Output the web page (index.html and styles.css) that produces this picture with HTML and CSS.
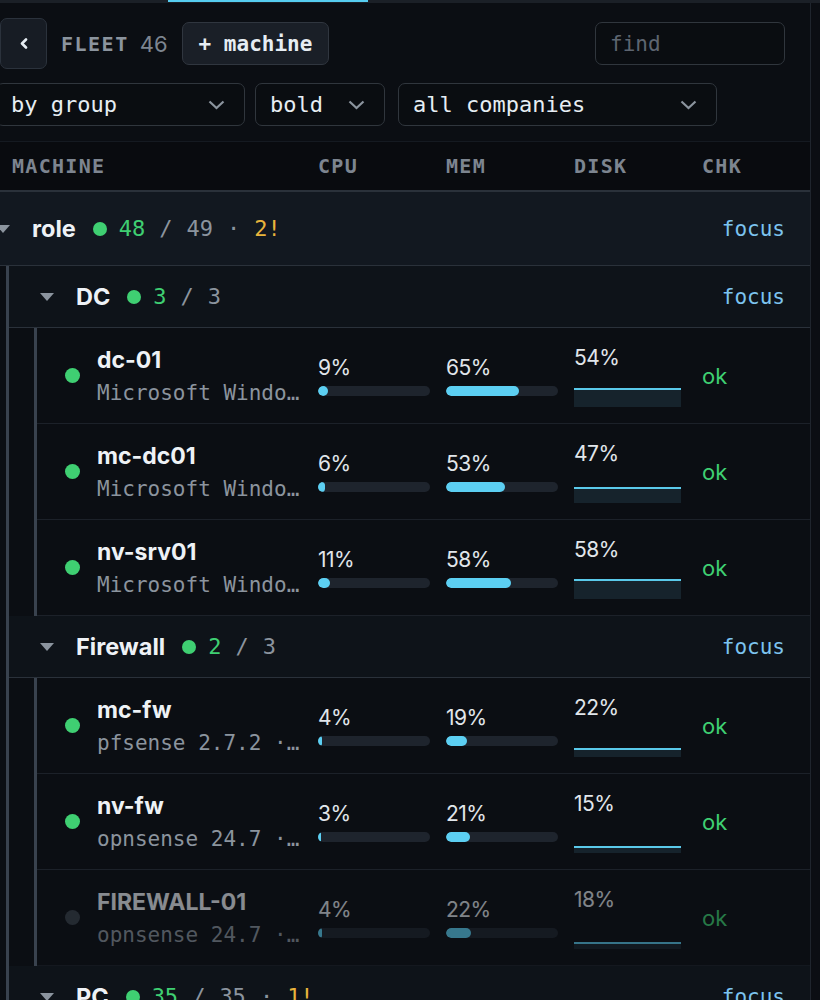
FILE: index.html
```html
<!DOCTYPE html>
<html lang="en">
<head>
<meta charset="UTF-8">
<meta name="viewport" content="width=device-width, initial-scale=1.0">
<title>Fleet</title>
<link rel="stylesheet" href="styles.css">
</head>
<body>
<div class="tabs"><div class="tab-on"></div></div>

<div class="panel">
  <!-- toolbar -->
  <div class="bar">
    <button class="back"><svg width="8" height="11" viewBox="0 0 8 11"><polyline points="6,1.5 2,5.5 6,9.5" fill="none" stroke="#e6edf3" stroke-width="2.6" stroke-linecap="round" stroke-linejoin="round"/></svg></button>
    <span class="title">FLEET</span><span class="count">46</span>
    <button class="add">+ machine</button>
    <input class="find" type="text" placeholder="find">
  </div>

  <div class="filters">
    <div class="select s-group">by group<svg width="17" height="10" viewBox="0 0 17 10"><polyline points="1.5,1.5 8.5,8 15.5,1.5" fill="none" stroke="#8b949e" stroke-width="2.2"/></svg></div>
    <div class="select s-style">bold<svg width="17" height="10" viewBox="0 0 17 10"><polyline points="1.5,1.5 8.5,8 15.5,1.5" fill="none" stroke="#8b949e" stroke-width="2.2"/></svg></div>
    <div class="select s-co">all companies<svg width="17" height="10" viewBox="0 0 17 10"><polyline points="1.5,1.5 8.5,8 15.5,1.5" fill="none" stroke="#8b949e" stroke-width="2.2"/></svg></div>
  </div>

  <!-- table -->
  <div class="thead">
    <div class="th-name">MACHINE</div><div>CPU</div><div>MEM</div><div>DISK</div><div>CHK</div>
  </div>

  <div class="group">
    <div class="ghead root">
      <svg class="caret" width="14" height="8" viewBox="0 0 14 8"><polygon points="0,0 14,0 7,8" fill="#8b949e"/></svg>
      <span class="gname">role</span>
      <span class="dot on"></span>
      <span class="up">48</span><span class="dim">/</span><span class="dim">49</span><span class="dim">·</span><span class="warn">2!</span>
      <a class="focus">focus</a>
    </div>

    <div class="kids">
      <!-- DC -->
      <div class="group">
        <div class="ghead">
          <svg class="caret" width="14" height="8" viewBox="0 0 14 8"><polygon points="0,0 14,0 7,8" fill="#8b949e"/></svg>
          <span class="gname">DC</span>
          <span class="dot on"></span>
          <span class="up">3</span><span class="dim">/</span><span class="dim">3</span>
          <a class="focus">focus</a>
        </div>
        <div class="kids">
          <div class="row">
            <div class="who"><span class="dot on"></span><div class="names"><div class="host">dc-01</div><div class="os">Microsoft Windows Server 2022</div></div></div>
            <div class="metric"><span class="pct">9%</span><div class="track"><div class="fill" style="width:9%"></div></div></div>
            <div class="metric"><span class="pct">65%</span><div class="track"><div class="fill" style="width:65%"></div></div></div>
            <div class="metric disk"><span class="pct">54%</span><div class="spark"><div class="area" style="height:54%"></div></div></div>
            <div class="chk">ok</div>
          </div>
          <div class="row">
            <div class="who"><span class="dot on"></span><div class="names"><div class="host">mc-dc01</div><div class="os">Microsoft Windows Server 2019</div></div></div>
            <div class="metric"><span class="pct">6%</span><div class="track"><div class="fill" style="width:6%"></div></div></div>
            <div class="metric"><span class="pct">53%</span><div class="track"><div class="fill" style="width:53%"></div></div></div>
            <div class="metric disk"><span class="pct">47%</span><div class="spark"><div class="area" style="height:47%"></div></div></div>
            <div class="chk">ok</div>
          </div>
          <div class="row">
            <div class="who"><span class="dot on"></span><div class="names"><div class="host">nv-srv01</div><div class="os">Microsoft Windows Server 2022</div></div></div>
            <div class="metric"><span class="pct">11%</span><div class="track"><div class="fill" style="width:11%"></div></div></div>
            <div class="metric"><span class="pct">58%</span><div class="track"><div class="fill" style="width:58%"></div></div></div>
            <div class="metric disk"><span class="pct">58%</span><div class="spark"><div class="area" style="height:58%"></div></div></div>
            <div class="chk">ok</div>
          </div>
        </div>
      </div>

      <!-- Firewall -->
      <div class="group">
        <div class="ghead">
          <svg class="caret" width="14" height="8" viewBox="0 0 14 8"><polygon points="0,0 14,0 7,8" fill="#8b949e"/></svg>
          <span class="gname">Firewall</span>
          <span class="dot on"></span>
          <span class="up">2</span><span class="dim">/</span><span class="dim">3</span>
          <a class="focus">focus</a>
        </div>
        <div class="kids">
          <div class="row">
            <div class="who"><span class="dot on"></span><div class="names"><div class="host">mc-fw</div><div class="os">pfsense 2.7.2 · FreeBSD 14.0</div></div></div>
            <div class="metric"><span class="pct">4%</span><div class="track"><div class="fill" style="width:4%"></div></div></div>
            <div class="metric"><span class="pct">19%</span><div class="track"><div class="fill" style="width:19%"></div></div></div>
            <div class="metric disk"><span class="pct">22%</span><div class="spark"><div class="area" style="height:24%"></div></div></div>
            <div class="chk">ok</div>
          </div>
          <div class="row">
            <div class="who"><span class="dot on"></span><div class="names"><div class="host">nv-fw</div><div class="os">opnsense 24.7 · FreeBSD 14.1</div></div></div>
            <div class="metric"><span class="pct">3%</span><div class="track"><div class="fill" style="width:3%"></div></div></div>
            <div class="metric"><span class="pct">21%</span><div class="track"><div class="fill" style="width:21%"></div></div></div>
            <div class="metric disk"><span class="pct">15%</span><div class="spark"><div class="area" style="height:18%"></div></div></div>
            <div class="chk">ok</div>
          </div>
          <div class="row offline">
            <div class="who"><span class="dot"></span><div class="names"><div class="host">FIREWALL-01</div><div class="os">opnsense 24.7 · FreeBSD 14.1</div></div></div>
            <div class="metric"><span class="pct">4%</span><div class="track"><div class="fill" style="width:4%"></div></div></div>
            <div class="metric"><span class="pct">22%</span><div class="track"><div class="fill" style="width:22%"></div></div></div>
            <div class="metric disk"><span class="pct">18%</span><div class="spark"><div class="area" style="height:18%"></div></div></div>
            <div class="chk">ok</div>
          </div>
        </div>
      </div>

      <!-- PC -->
      <div class="group">
        <div class="ghead">
          <svg class="caret" width="14" height="8" viewBox="0 0 14 8"><polygon points="0,0 14,0 7,8" fill="#8b949e"/></svg>
          <span class="gname">PC</span>
          <span class="dot on"></span>
          <span class="up">35</span><span class="dim">/</span><span class="dim">35</span><span class="dim">·</span><span class="warn">1!</span>
          <a class="focus">focus</a>
        </div>
      </div>
    </div>
  </div>
</div>
</body>
</html>
```

FILE: styles.css
```css
:root{
  --mono:"DejaVu Sans Mono","Liberation Mono",monospace;
  --sans:Inter,"Noto Sans",sans-serif;
  --bg:#0b0e13;
  --line:#1c2129;
  --edge:#2a313a;
  --text:#e6edf3;
  --muted:#8b949e;
  --green:#3fcf72;
  --cyan:#5ccff2;
}
html,body{margin:0;background:var(--bg);overflow:hidden;}
body{font-family:var(--mono);color:var(--text);}

.tabs{height:3px;background:#1b2027;}
.tab-on{margin-left:168px;width:200px;height:2px;background:#56cdf0;}

.panel{margin-left:-20px;width:830px;border-right:1px solid #1f252d;padding-top:15px;}

/* ---- toolbar ---- */
.bar{display:flex;align-items:center;height:51px;padding:0 25px 0 20px;}
.back{width:47px;height:51px;box-sizing:border-box;background:#171c24;border:1px solid #2b323c;border-radius:7px;display:flex;align-items:center;justify-content:center;padding:0;}
.title{margin-left:14px;font-weight:bold;font-size:20px;letter-spacing:1.5px;color:var(--muted);}
.count{margin-left:11px;font-family:var(--sans);font-size:22px;color:#7d8590;}
.add{margin-left:14px;height:43px;padding:0 16px;background:#1a1f27;border:1px solid #30363f;border-radius:7px;color:var(--text);font-family:var(--mono);font-weight:bold;font-size:21px;}
.find{margin-left:auto;width:190px;height:43px;box-sizing:border-box;background:#0a0d11;border:1px solid #30363d;border-radius:7px;padding:0 14px;color:var(--text);font-family:var(--mono);font-size:21px;outline:none;}
.find::placeholder{color:#5d6570;}

.filters{display:flex;gap:10px;margin-top:14px;padding-left:16px;}
.select{height:43px;box-sizing:border-box;display:flex;align-items:center;justify-content:space-between;padding:0 19px 0 14px;border:1px solid #30363d;border-radius:7px;background:#0a0d11;font-size:22px;color:var(--text);}
.s-group{width:249px;}
.s-style{width:130px;}
.s-co{width:319px;margin-left:3px;}

/* ---- table ---- */
.thead{display:grid;grid-template-columns:1fr 128px 128px 128px 108px;align-items:center;height:48px;margin-top:15px;border-top:1px solid #151a21;border-bottom:2px solid var(--edge);background:#090b0f;font-weight:bold;font-size:20px;letter-spacing:1.3px;color:#7d8590;}
.th-name{padding-left:32px;}

.ghead{display:flex;align-items:center;gap:14px;height:61px;padding-left:31px;border-bottom:1px solid var(--edge);background:#0e1319;font-size:22px;}
.ghead.root{height:73px;padding-left:16px;background:#121820;}
.caret{margin-right:8px;flex:none;}
.gname{font-family:var(--sans);font-weight:700;font-size:23.5px;color:#eef2f6;}
.ghead .dot{margin:0 -2px 0 3px;}
.up{color:var(--green);}
.dim{color:var(--muted);}
.warn{color:#e8b43c;}
.focus{margin-left:auto;padding-right:25px;color:#7cc3ef;font-size:21px;}

.kids{margin-left:26px;border-left:3px solid #39424e;}
.kids .kids{margin-left:25px;}

.dot{width:14px;height:14px;border-radius:50%;background:#3a414b;flex:none;}
.dot.on{background:var(--green);}

.row{display:grid;grid-template-columns:1fr 128px 128px 128px 108px;align-items:center;height:95px;border-bottom:1px solid var(--line);}
.row.offline{opacity:.55;}
.who{display:flex;align-items:center;gap:17px;padding:0 16px 0 28px;min-width:0;}
.who .dot{width:15px;height:15px;}
.names{min-width:0;flex:1;}
.host{font-family:var(--sans);font-weight:700;font-size:23px;line-height:28px;color:#eef2f6;}
.os{margin-top:6px;font-size:21px;line-height:26px;color:var(--muted);white-space:nowrap;overflow:hidden;text-overflow:ellipsis;}

.metric{display:flex;flex-direction:column;gap:5px;}
.pct{font-family:var(--sans);font-size:21px;line-height:26px;letter-spacing:-.5px;color:#e1e6eb;}
.track{width:112px;height:10px;border-radius:5px;background:#1e242d;overflow:hidden;}
.fill{height:100%;border-radius:5px;background:var(--cyan);}
.disk{gap:2px;}
.spark{width:107px;height:34px;display:flex;align-items:flex-end;}
.area{width:100%;box-sizing:border-box;background:#16232c;border-top:2px solid #5ac9ea;}
.chk{font-family:var(--sans);font-size:22px;color:var(--green);}
```
